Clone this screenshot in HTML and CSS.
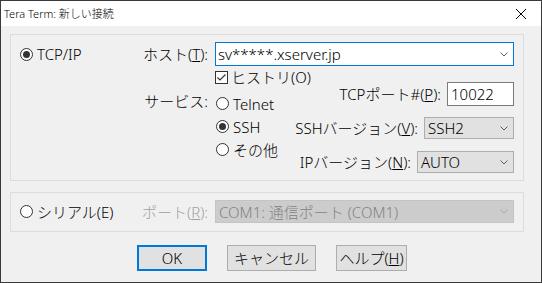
FILE: index.html
```html
<!DOCTYPE html>
<html>
<head>
  <title>Tera Term: 新しい接続</title>
  <meta charset="utf-8">
  <link rel="stylesheet" href="styles.css">
</head>
<body>
  <div class="window">
    <div class="titlebar">
      <span class="title">Tera Term: 新しい接続</span>
      <svg class="close-icon" viewBox="0 0 10 10"><path d="M0 0 L10 10 M10 0 L0 10" stroke="#000" stroke-width="1"/></svg>
    </div>
    <div class="dialog">
      <div class="group group-tcp">
        <div class="side">
          <div class="radio radio-top"><span class="dot on"></span>TCP/IP</div>
        </div>
        <div class="main">
          <div class="host-row">
            <span class="lbl">ホスト(<u>T</u>):</span>
            <div class="combo combo-host">
              <span>sv*****.xserver.jp</span>
              <svg class="chev" viewBox="0 0 8 5"><path d="M0.5 0.5 L4 4 L7.5 0.5" fill="none" stroke="#606060"/></svg>
            </div>
          </div>
          <div class="lower">
            <div class="service">
              <div class="check-row">
                <span class="box"><svg viewBox="0 0 11 11"><path d="M1.5 5.5 L4 8 L9.5 2.5" fill="none" stroke="#333" stroke-width="1.2"/></svg></span>
                ヒストリ(O)
              </div>
              <div class="service-row">
                <span class="lbl lbl-service">サービス:</span>
                <div class="radios">
                  <div class="radio"><span class="dot"></span>Telnet</div>
                  <div class="radio"><span class="dot on"></span>SSH</div>
                  <div class="radio"><span class="dot"></span>その他</div>
                </div>
              </div>
            </div>
            <div class="settings">
              <div class="set-row port-row">
                <span>TCPポート#(<u>P</u>):</span>
                <div class="input">10022</div>
              </div>
              <div class="set-row ssh-row">
                <span>SSHバージョン(<u>V</u>):</span>
                <div class="select select-ssh">
                  <span>SSH2</span>
                  <svg class="chev" viewBox="0 0 8 5"><path d="M0.5 0.5 L4 4 L7.5 0.5" fill="none" stroke="#606060"/></svg>
                </div>
              </div>
              <div class="set-row ip-row">
                <span>IPバージョン(<u>N</u>):</span>
                <div class="select select-ip">
                  <span>AUTO</span>
                  <svg class="chev" viewBox="0 0 8 5"><path d="M0.5 0.5 L4 4 L7.5 0.5" fill="none" stroke="#606060"/></svg>
                </div>
              </div>
            </div>
          </div>
        </div>
      </div>

      <div class="group group-serial">
        <div class="side">
          <div class="radio radio-serial"><span class="dot"></span>シリアル(E)</div>
        </div>
        <div class="main">
          <div class="serial-row">
            <span class="lbl disabled">ポート(<u>R</u>):</span>
            <div class="select select-serial">
              <span>COM1: 通信ポート (COM1)</span>
              <svg class="chev" viewBox="0 0 8 5"><path d="M0.5 0.5 L4 4 L7.5 0.5" fill="none" stroke="#a8a8a8"/></svg>
            </div>
          </div>
        </div>
      </div>

      <div class="buttons">
        <div class="btn btn-ok">OK</div>
        <div class="btn btn-cancel">キャンセル</div>
        <div class="btn btn-help">ヘルプ(<u>H</u>)</div>
      </div>
    </div>
  </div>
</body>
</html>
```

FILE: styles.css
```css
body {
  margin: 0;
  background-color: #f0f0f0;
}

.window {
  width: 542px;
  height: 283px;
  box-sizing: border-box;
  border: 1px solid #3a3a3a;
  background-color: #f0f0f0;
  font-family: "Noto Sans", "Noto Sans CJK JP", sans-serif;
  font-size: 15px;
  font-weight: 300;
  line-height: 20px;
  color: #000;
  overflow: hidden;
}

.titlebar {
  height: 25px;
  background-color: #fff;
  display: flex;
  align-items: center;
  justify-content: space-between;
  padding-left: 3px;
  font-size: 11px;
}

.close-icon {
  width: 10px;
  height: 10px;
  margin-right: 15px;
}

.dialog {
  padding-top: 8px;
}

.group {
  width: 514px;
  box-sizing: border-box;
  margin-left: 9px;
  border: 1px solid #dcdcdc;
  padding: 7px 0 0 9px;
  display: flex;
}

.group-tcp {
  height: 147px;
}

.group-serial {
  height: 40px;
  margin-top: 11px;
}

.side {
  width: 126px;
}

.main {
  width: 368px;
}

.radio {
  display: flex;
  align-items: center;
  gap: 4px;
  height: 23px;
  white-space: nowrap;
}

.radio-top {
  height: 24px;
}

.dot {
  width: 13px;
  height: 13px;
  box-sizing: border-box;
  border: 1px solid #333;
  border-radius: 50%;
  background-color: #fff;
  display: flex;
  align-items: center;
  justify-content: center;
  flex-shrink: 0;
}

.dot.on::after {
  content: "";
  width: 7px;
  height: 7px;
  border-radius: 50%;
  background-color: #333;
}

.lbl {
  width: 62px;
  margin-right: 7px;
  display: flex;
  justify-content: flex-end;
  white-space: nowrap;
  flex-shrink: 0;
}

.host-row {
  display: flex;
  align-items: center;
  height: 24px;
}

.combo {
  width: 299px;
  height: 24px;
  box-sizing: border-box;
  border: 1px solid #7a7a7a;
  background-color: #fff;
  display: flex;
  align-items: center;
  justify-content: space-between;
  padding: 0 5px 0 2px;
}

.combo-host {
  border-color: #0078d7;
}

.chev {
  width: 8px;
  height: 5px;
}

.lower {
  display: flex;
}

.service {
  width: 140px;
  flex-shrink: 0;
}

.check-row {
  height: 22px;
  margin-left: 69px;
  display: flex;
  align-items: center;
  gap: 3px;
  white-space: nowrap;
}

.box {
  width: 13px;
  height: 13px;
  box-sizing: border-box;
  border: 1px solid #333;
  background-color: #fff;
  display: flex;
  flex-shrink: 0;
}

.box svg {
  width: 11px;
  height: 11px;
}

.service-row {
  display: flex;
  margin-top: 4px;
}

.lbl-service {
  height: 23px;
  align-items: center;
  margin-top: -3px;
}

.radios {
  display: flex;
  flex-direction: column;
  padding-left: 1px;
}

.settings {
  margin-left: auto;
  display: flex;
  flex-direction: column;
  align-items: flex-end;
}

.set-row {
  display: flex;
  align-items: center;
  gap: 6px;
  white-space: nowrap;
}

.port-row {
  margin-top: 16px;
}

.ssh-row {
  margin-top: 11px;
}

.ip-row {
  margin-top: 12px;
}

.input {
  width: 67px;
  height: 24px;
  box-sizing: border-box;
  border: 1px solid #7a7a7a;
  background-color: #fff;
  padding-left: 3px;
  display: flex;
  align-items: center;
}

.select {
  height: 22px;
  box-sizing: border-box;
  border: 1px solid #adadad;
  background-color: #e1e1e1;
  padding: 0 5px 0 3px;
  display: flex;
  align-items: center;
  justify-content: space-between;
}

.select-ssh {
  width: 90px;
}

.select-ip {
  width: 97px;
}

.serial-row {
  display: flex;
  align-items: center;
}

.select-serial {
  width: 299px;
  height: 23px;
  background-color: #cccccc;
  border-color: #c4c4c4;
  color: #838383;
}

.disabled {
  color: #a0a0a0;
}

.radio-serial {
  height: 23px;
}

.buttons {
  display: flex;
  justify-content: center;
  gap: 20px;
  margin-top: 13px;
  padding-left: 2px;
}

.btn {
  height: 26px;
  box-sizing: border-box;
  border: 1px solid #adadad;
  background-color: #e1e1e1;
  display: flex;
  align-items: center;
  justify-content: center;
  white-space: nowrap;
}

.btn-ok {
  width: 70px;
  border: 2px solid #0078d7;
}

.btn-cancel {
  width: 89px;
}

.btn-help {
  width: 71px;
}
```
